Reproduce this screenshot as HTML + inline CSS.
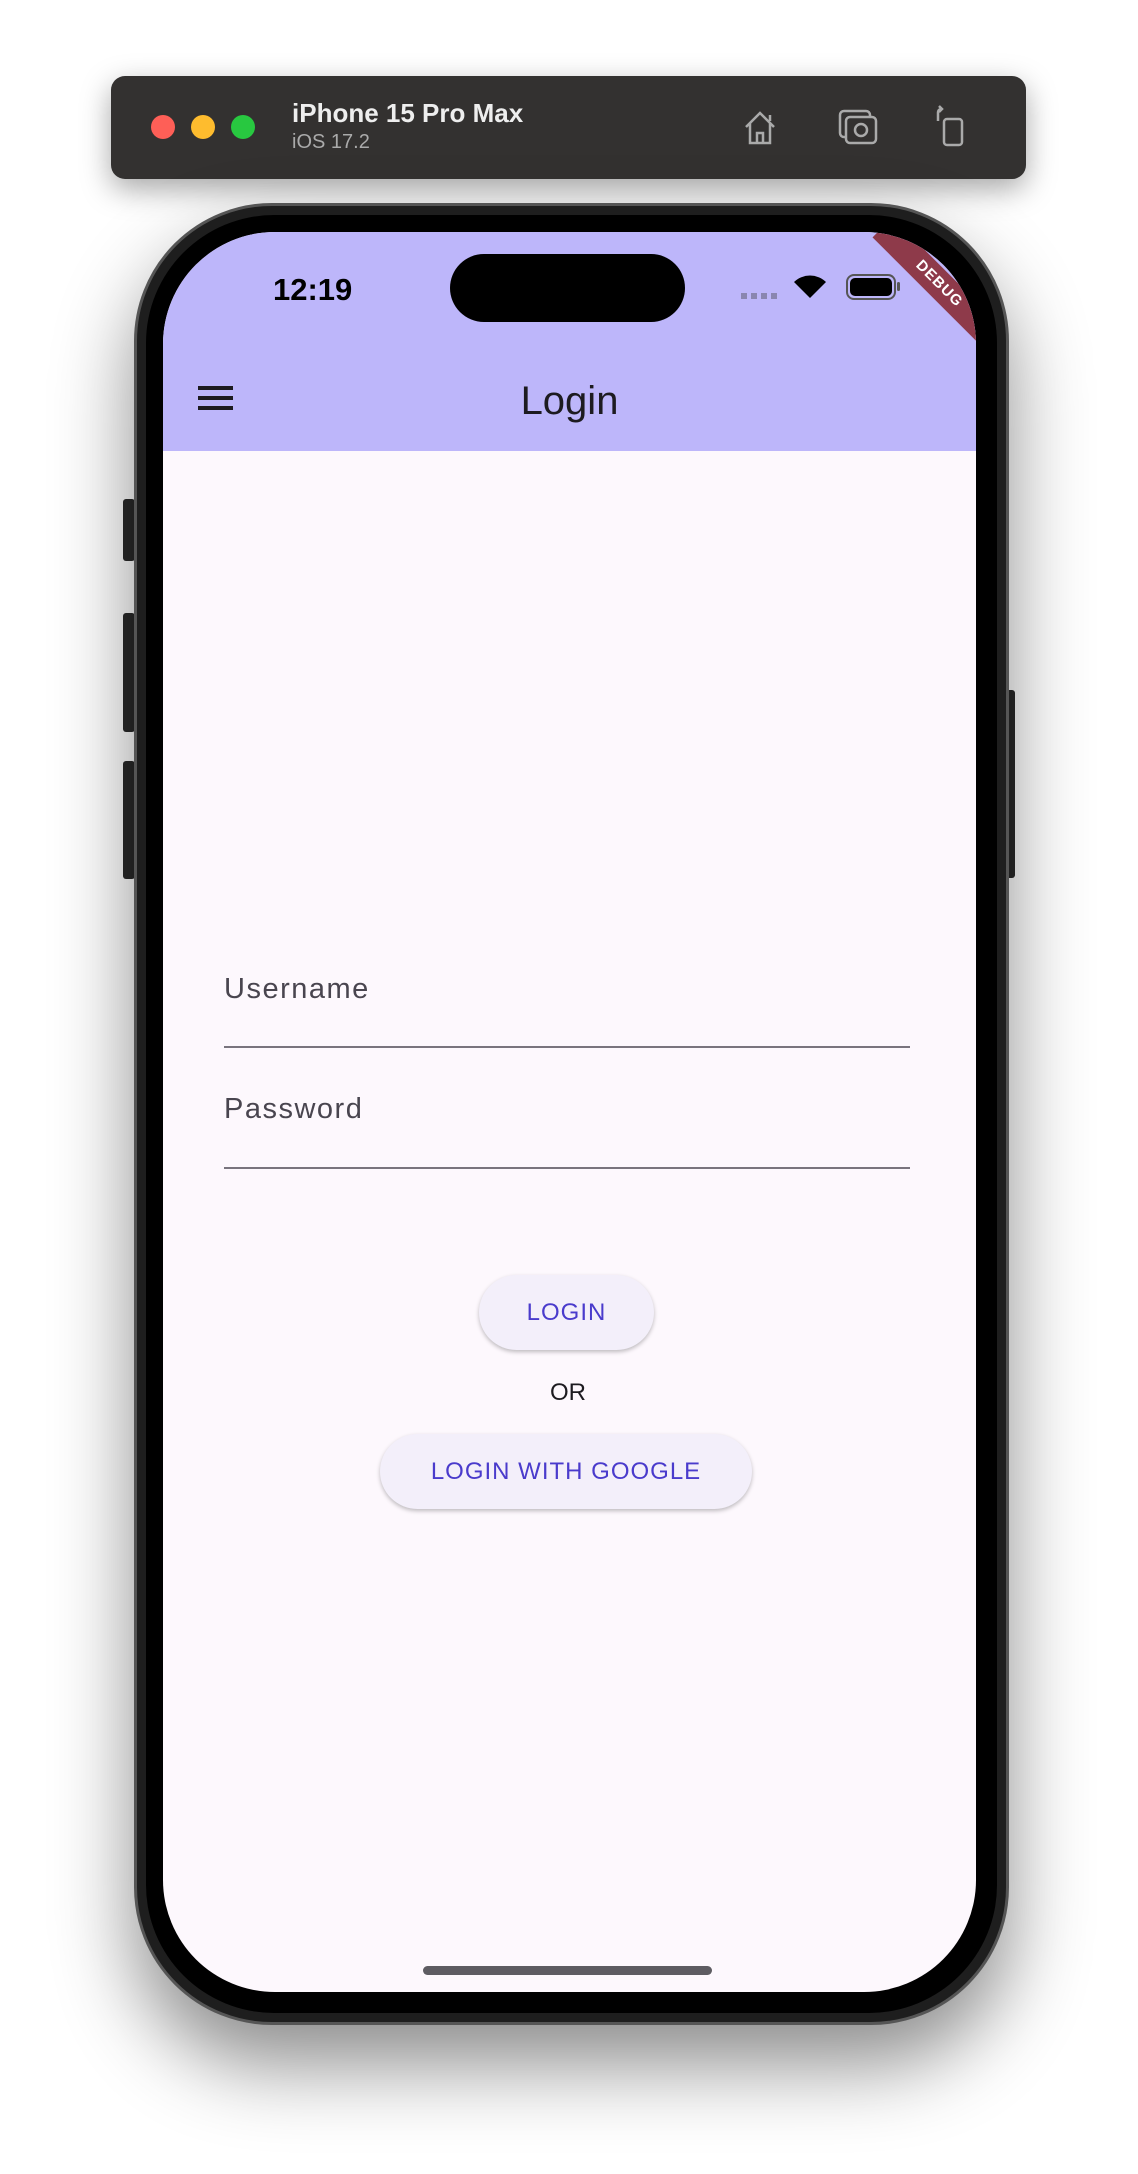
<!DOCTYPE html>
<html><head><meta charset="utf-8"><style>
*{margin:0;padding:0;box-sizing:border-box}
body{width:1138px;height:2174px;background:#fff;position:relative;overflow:hidden;font-family:"Liberation Sans",sans-serif}
.abs{position:absolute}
#toolbar{left:111px;top:76px;width:915px;height:103px;background:#333130;border-radius:14px;box-shadow:0 10px 30px rgba(0,0,0,.35)}
.dot{position:absolute;top:115px;width:24px;height:24px;border-radius:50%}
#phone{left:134px;top:203px;width:875px;height:1822px;border-radius:138px;background:#1e1e1e;border:3px solid #555;box-shadow:0 40px 80px rgba(0,0,0,.45)}
#bezel{left:146px;top:215px;width:851px;height:1798px;border-radius:128px;background:#000}
#screen{left:163px;top:232px;width:813px;height:1760px;border-radius:112px;background:#fdf8fd;overflow:hidden}
#appbar{left:0;top:0;width:813px;height:219px;background:#bdb6fa}
.btn{position:absolute;background:#f3effa;border-radius:40px;box-shadow:0 2px 4px rgba(0,0,0,.25);color:#4a3bcc;font-size:24px;text-align:center;letter-spacing:1px}
.side{position:absolute;background:#2a2a2a;border-radius:3px}
</style></head><body>
<div id="toolbar" class="abs"></div>
<div class="dot" style="left:151px;background:#fe5f57"></div>
<div class="dot" style="left:191px;background:#febc2e"></div>
<div class="dot" style="left:231px;background:#28c840"></div>
<div class="abs" style="left:292px;top:98px;color:#eee;font-weight:bold;font-size:26px">iPhone 15 Pro Max</div>
<div class="abs" style="left:292px;top:131px;color:#aaa;font-size:20px">iOS 17.2</div>
<svg class="abs" style="left:740px;top:107px" width="40" height="40" viewBox="0 0 40 40" fill="none" stroke="#aaa" stroke-width="2.5"><path d="M6 20 L20 6 L34 20 M10 16 V36 H30 V16 M17 36 V26 H23 V36 M30 8 V14"/></svg>
<svg class="abs" style="left:837px;top:107px" width="42" height="40" viewBox="0 0 42 40" fill="none" stroke="#aaa" stroke-width="2.5"><rect x="3" y="4" width="30" height="26" rx="4"/><rect x="9" y="10" width="30" height="26" rx="4" fill="#333130"/><circle cx="24" cy="23" r="6"/></svg>
<svg class="abs" style="left:932px;top:105px" width="36" height="42" viewBox="0 0 36 42" fill="none" stroke="#aaa" stroke-width="2.5"><rect x="12" y="14" width="18" height="26" rx="3"/><path d="M6 16 V8 Q6 4 10 4 M7 1 L10 4 L7 7"/></svg>

<div class="side" style="left:123px;top:499px;width:12px;height:62px"></div>
<div class="side" style="left:123px;top:613px;width:12px;height:119px"></div>
<div class="side" style="left:123px;top:761px;width:12px;height:118px"></div>
<div class="side" style="left:1005px;top:690px;width:10px;height:188px"></div>
<div id="phone" class="abs"></div>
<div id="bezel" class="abs"></div>
<div id="screen" class="abs">
  <div id="appbar" class="abs"></div>
  <div class="abs" style="left:110px;top:40px;font-size:31px;font-weight:bold;color:#000">12:19</div>
  <div class="abs" style="left:287px;top:22px;width:235px;height:68px;background:#000;border-radius:34px"></div>
  <div class="abs" style="left:578px;top:61px;width:40px;height:6px;background:repeating-linear-gradient(90deg,#8a86b0 0 6px,transparent 6px 10px)"></div>
  <svg class="abs" style="left:629px;top:40px" width="36" height="28" viewBox="0 0 36 28"><path d="M18 26 L2 10 A23 23 0 0 1 34 10 Z" fill="#000"/></svg>
  <div class="abs" style="left:683px;top:42px;width:50px;height:26px;border:2px solid #555;border-radius:8px;padding:2px"><div style="width:100%;height:100%;background:#000;border-radius:5px"></div></div>
  <div class="abs" style="left:734px;top:50px;width:3px;height:9px;background:#555;border-radius:2px"></div>
  <div class="abs" style="left:696px;top:38px;width:160px;height:28px;background:#8e3a4a;transform:rotate(45deg);color:#fff;font-size:15px;font-weight:bold;text-align:center;line-height:28px;letter-spacing:1px">DEBUG</div>
  <div class="abs" style="left:35px;top:164px;width:35px;height:4px;background:#1d1b20;box-shadow:0 -10px 0 #1d1b20,0 10px 0 #1d1b20"></div>
  <div class="abs" style="left:0;top:147px;width:813px;text-align:center;font-size:40px;color:#1d1b20">Login</div>
  <div class="abs" style="left:61px;top:741px;font-size:29px;color:#49454f;letter-spacing:1.5px">Username</div>
  <div class="abs" style="left:61px;top:814px;width:686px;height:2px;background:#79747e"></div>
  <div class="abs" style="left:61px;top:861px;font-size:29px;color:#49454f;letter-spacing:1.5px">Password</div>
  <div class="abs" style="left:61px;top:935px;width:686px;height:2px;background:#79747e"></div>
  <div class="btn" style="left:316px;top:1043px;width:175px;height:75px;line-height:75px">LOGIN</div>
  <div class="abs" style="left:0;top:1147px;width:810px;text-align:center;font-size:24px;color:#1d1b20">OR</div>
  <div class="btn" style="left:217px;top:1202px;width:372px;height:75px;line-height:75px">LOGIN WITH GOOGLE</div>
  <div class="abs" style="left:260px;top:1734px;width:289px;height:9px;background:#5e5c62;border-radius:5px"></div>
</div>
</body></html>
